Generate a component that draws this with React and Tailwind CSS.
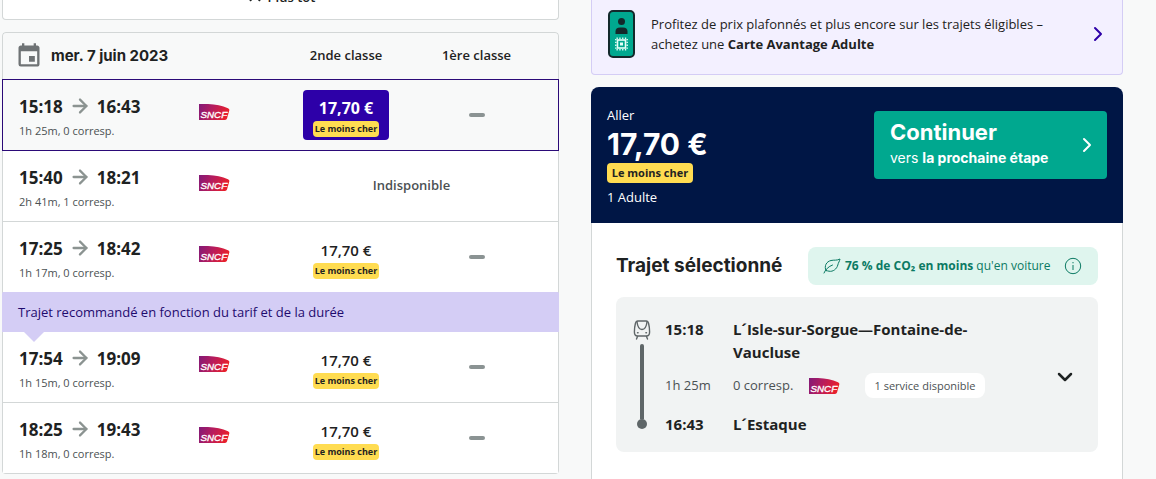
import React, { useState } from 'react'
import { ArrowRight, ChevronDown, ChevronRight, ChevronUp } from 'lucide-react'
import { MdEvent } from 'react-icons/md'

const TRIPS = [
  { depart: '15:18', arrive: '16:43', details: '1h 25m, 0 corresp.', price: '17,70 €' },
  { depart: '15:40', arrive: '18:21', details: '2h 41m, 1 corresp.', price: null },
  { depart: '17:25', arrive: '18:42', details: '1h 17m, 0 corresp.', price: '17,70 €' },
  { depart: '17:54', arrive: '19:09', details: '1h 15m, 0 corresp.', price: '17,70 €', recommended: true },
  { depart: '18:25', arrive: '19:43', details: '1h 18m, 0 corresp.', price: '17,70 €' },
]

function SncfLogo() {
  return (
    <svg width="31" height="16" viewBox="0 0 31 16" role="img" aria-label="SNCF" className="shrink-0">
      <defs>
        <linearGradient id="sncf" x1="0" y1="0" x2="1" y2="0.2">
          <stop offset="0" stopColor="#821a78" />
          <stop offset="0.5" stopColor="#b81c5c" />
          <stop offset="1" stopColor="#e8202c" />
        </linearGradient>
      </defs>
      <path d="M0 0H9C17 .3 23 1.800 29 4.200Q30.800 5 30.300 6.500L28 14.600Q27.600 16 26 16H0Z" fill="url(#sncf)" />
      <text x="1.500" y="14.200" fontFamily="Liberation Sans, sans-serif" fontSize="9.800" fontStyle="italic" fill="#fff" stroke="#fff" strokeWidth="0.350">SNCF</text>
    </svg>
  )
}

function CardIcon() {
  return (
    <svg width="27" height="48" viewBox="0 0 27 48" aria-hidden="true" className="shrink-0">
      <rect x="1" y="1" width="25" height="46" rx="4" fill="#00a88f" stroke="#13292b" strokeWidth="2" />
      <circle cx="13.500" cy="11.500" r="3.500" fill="#13292b" />
      <path d="M7.500 24v-2.500q0-4 4.500-4h3q4.500 0 4.500 4v2.500z" fill="#13292b" />
      <g stroke="#e6fff8" fill="none">
        <rect x="9.500" y="30" width="8" height="8" strokeWidth="1.600" />
        <path d="M8.500 28.300h10.500M8.500 39.700h10.500" strokeWidth="1.400" strokeDasharray="1.300 1.500" />
        <path d="M7.800 29v10.500M19.200 29v10.500" strokeWidth="1.400" strokeDasharray="1.300 1.500" />
      </g>
      <rect x="12" y="32.500" width="3" height="3" fill="#e6fff8" />
    </svg>
  )
}

function LeafIcon() {
  return (
    <svg width="18" height="16" viewBox="0 0 18 16" fill="none" stroke="#0b7a63" strokeLinecap="round" strokeLinejoin="round" aria-hidden="true">
      <path d="M3 12.500C.8 8 3.500 3.500 8 2.500c3-.7 6 .2 9-1.500-.5 2.500-1.600 3.500-2.200 6C13.800 11 10 14 6 13.200 5 13 4 12.800 3 12.500Z" />
      <path d="M1 15c1.500-3.500 4.500-6.500 8.500-8" />
    </svg>
  )
}

function InfoIcon() {
  return (
    <svg width="18" height="18" viewBox="0 0 18 18" fill="none" stroke="#0b7a63" aria-hidden="true">
      <circle cx="9" cy="9" r="7.700" />
      <path d="M9 8v5M9 5v1.300" />
    </svg>
  )
}

function TrainIcon() {
  return (
    <svg width="18" height="20" viewBox="0 0 18 20" fill="none" stroke="#5f6668" strokeWidth="1.400" strokeLinecap="round" strokeLinejoin="round" aria-hidden="true">
      <path d="M4.800 1h8.400c1.500 0 2 1 2.400 2.500.7 2.600 1 5.300 1 8.500 0 2.500-1 4-3.100 4h-9c-2.100 0-3.100-1.500-3.100-4 0-3.200.3-5.900 1-8.500C2.800 2 3.300 1 4.800 1Z" />
      <path d="M4 1.800C4.500 6.500 6 9.500 9 9.500s4.500-3 5-7.700M4.500 16.500 3.500 19M13.500 16.500l1 2.500" />
      <path d="M4.500 12.700h.6M12.900 12.700h.6" />
    </svg>
  )
}

function CheapestBadge({ large }) {
  return (
    <span
      className={
        large
          ? 'inline-flex h-5 w-[86px] items-center justify-center rounded bg-[#ffdc51] text-[11px] font-bold whitespace-nowrap text-[#1e2222]'
          : 'flex h-4 w-[66px] items-center justify-center rounded bg-[#ffdc51] text-[9px] font-bold whitespace-nowrap text-[#1e2222]'
      }
    >
      Le moins cher
    </span>
  )
}

function TripRow({ trip, selected, beforeBanner, onSelect }) {
  const edge = selected ? 'border-[#2b0a78]' : beforeBanner ? 'border-[#d4cdf5] border-x-[#d3d7d7]' : 'border-[#d3d7d7]'
  const cell = `border-b p-0 first:border-l last:border-r ${edge} ${selected ? 'h-[72px] border-t bg-[#f8f9f9]' : 'h-[71px] bg-white'}`

  return (
    <tr>
      <td className={`${cell} pt-1 pl-4`}>
        <div className="flex items-center gap-[6px] pt-[2px] text-[17px] leading-6 font-bold">
          <span>{trip.depart}</span>
          <ArrowRight size={22} strokeWidth={2.5} className="mb-[2px] text-[#8b9391]" />
          <span>{trip.arrive}</span>
        </div>
        <div className="pt-[2px] text-[11px] leading-5 text-[#4b5153]">{trip.details}</div>
      </td>
      <td className={`${cell} pb-[6px]`}><SncfLogo /></td>
      {trip.price ? (
        <>
          <td className={cell}>
            <button
              type="button"
              onClick={onSelect}
              className={`mx-auto flex h-[50px] w-[86px] flex-col items-center rounded pt-[6px] ${selected ? 'bg-[#2d00a8] font-bold text-white' : 'font-semibold'}`}
            >
              <span className={`pb-px leading-6 ${selected ? 'text-base' : 'text-[15px]'}`}>{trip.price}</span>
              <CheapestBadge />
            </button>
          </td>
          <td className={`${cell} pr-4`}>
            <div className="mx-auto h-1 w-4 rounded-full bg-[#8b9393]" />
          </td>
        </>
      ) : (
        <td colSpan={2} className={`${cell} pr-4 text-center text-[13px] font-semibold text-[#4b5153]`}>Indisponible</td>
      )}
    </tr>
  )
}

function TripTable() {
  const [selected, setSelected] = useState(0)
  const head = 'h-[47px] border-t border-[#d3d7d7] p-0'

  return (
    <table className="w-full table-fixed border-separate border-spacing-0 overflow-hidden rounded">
      <colgroup>
        <col />
        <col className="w-[82px]" />
        <col className="w-[130px]" />
        <col className="w-[148px]" />
      </colgroup>
      <thead>
        <tr>
          <th colSpan={2} className={`${head} rounded-tl border-l pl-3 text-left`}>
            <div className="flex items-center gap-2 font-[Inter,sans-serif] text-[15px] font-bold">
              <MdEvent size={28} className="text-[#6f7375]" />
              mer. 7 juin 2023
            </div>
          </th>
          <th className={`${head} text-[13px] font-semibold`}>2nde classe</th>
          <th className={`${head} rounded-tr border-r pr-4 text-[13px] font-semibold`}>1ère classe</th>
        </tr>
      </thead>
      <tbody>
        {TRIPS.map((trip, i) => (
          <React.Fragment key={trip.depart}>
            {trip.recommended && (
              <tr>
                <td colSpan={4} className="relative h-[39px] bg-[#d4cdf5] p-0 pl-4 text-[13px] text-[#1e0a6e]">
                  Trajet recommandé en fonction du tarif et de la durée
                  <svg width="20" height="10" viewBox="0 0 20 10" className="absolute top-full left-[22px]" aria-hidden="true">
                    <path d="M0 0h20L10 10Z" fill="#d4cdf5" />
                  </svg>
                </td>
              </tr>
            )}
            <TripRow
              trip={trip}
              selected={i === selected}
              beforeBanner={!!TRIPS[i + 1]?.recommended}
              onSelect={() => setSelected(i)}
            />
          </React.Fragment>
        ))}
      </tbody>
    </table>
  )
}

function Summary() {
  return (
    <div className="flex items-start justify-between rounded-t-lg bg-[#001645] px-4 pt-[18px] pb-4 text-white">
      <div className="text-[13px] leading-5">
        <div>Aller</div>
        <div className="font-[Inter,sans-serif] text-[30px] leading-[38px] font-bold">17,70 €</div>
        <div className="flex"><CheapestBadge large /></div>
        <div className="pt-1">1 Adulte</div>
      </div>
      <button type="button" className="mt-[6px] flex h-[68px] w-[233px] items-center justify-between rounded bg-[#00a88f] pr-2 pl-4 text-left font-[Inter,sans-serif]">
        <span className="pb-[2px]">
          <span className="block text-[22px] leading-7 font-bold">Continuer</span>
          <span className="block text-sm leading-6">vers <b>la prochaine étape</b></span>
        </span>
        <ChevronRight size={24} strokeWidth={2} />
      </button>
    </div>
  )
}

function SelectedTrip() {
  return (
    <section className="flex-1 border-x border-[#d3d7d7] bg-white px-6 pt-6">
      <div className="flex items-center justify-between">
        <h2 className="font-[Inter,sans-serif] text-[19px] font-bold">Trajet sélectionné</h2>
        <div className="flex h-[38px] w-[290px] items-center rounded-lg bg-[#dff5ee] pl-[15px] text-xs text-[#0b7a63]">
          <LeafIcon />
          <span className="flex-1 pl-1 whitespace-nowrap"><b>76 % de CO₂ en moins</b> qu'en voiture</span>
          <button type="button" aria-label="Informations CO₂" className="mr-4"><InfoIcon /></button>
        </div>
      </div>

      <div className="mt-3 flex rounded-lg bg-[#f1f3f3] pt-[21px] pr-[21px] pb-4 pl-4">
        <div className="flex w-5 flex-col items-center pt-[2px] pb-[7px]">
          <TrainIcon />
          <div className="mt-1 w-1 flex-1 rounded-t-full bg-[#5f6668]" />
          <div className="size-[10px] rounded-full bg-[#5f6668]" />
        </div>
        <div className="min-w-0 flex-1 pl-[13px] text-[15px] leading-[23px] font-bold">
          <div className="flex">
            <span className="w-[68px] shrink-0">15:18</span>
            <span className="max-w-[260px]">L´Isle-sur-Sorgue—Fontaine-de-Vaucluse</span>
          </div>
          <div className="box-content flex h-[25px] items-center pt-[9px] pb-[15px] text-[13px] font-normal text-[#4b5153]">
            <span className="w-[68px] shrink-0">1h 25m</span>
            <span className="w-[76px] shrink-0">0 corresp.</span>
            <SncfLogo />
            <span className="ml-[25px] flex h-[25px] w-[120px] items-center justify-center rounded-lg bg-white text-[11px] whitespace-nowrap">1 service disponible</span>
          </div>
          <div className="flex">
            <span className="w-[68px] shrink-0">16:43</span>
            <span>L´Estaque</span>
          </div>
        </div>
        <button type="button" aria-label="Afficher les détails" className="self-center">
          <ChevronDown size={24} strokeWidth={2.5} />
        </button>
      </div>
    </section>
  )
}

export default function App() {
  return (
    <div className="grid min-h-screen grid-cols-[557fr_532fr] gap-x-8 bg-[#f8f9f9] pr-[33px] pl-[2px] font-['Open_Sans',sans-serif] text-[#1e2222]">
      <div className="flex flex-col gap-3">
        <button type="button" className="flex h-5 items-end justify-center gap-1 overflow-hidden rounded-b border border-t-0 border-[#d3d7d7] bg-white pb-3 text-[13px] leading-5 font-semibold">
          <ChevronUp size={18} strokeWidth={2.5} />
          Plus tôt
        </button>
        <TripTable />
      </div>

      <div className="flex min-w-0 flex-col">
        <a href="#carte" className="mb-3 flex items-center gap-4 rounded-b border border-t-0 border-[#d4cdf5] bg-[#f3f0ff] pt-[10px] pr-3 pb-4 pl-4">
          <CardIcon />
          <p className="flex-1 text-[13px] leading-5">
            Profitez de prix plafonnés et plus encore sur les trajets éligibles – achetez une <b>Carte Avantage Adulte</b>
          </p>
          <ChevronRight size={24} strokeWidth={2} className="text-[#2d00a8]" />
        </a>
        <Summary />
        <SelectedTrip />
      </div>
    </div>
  )
}
